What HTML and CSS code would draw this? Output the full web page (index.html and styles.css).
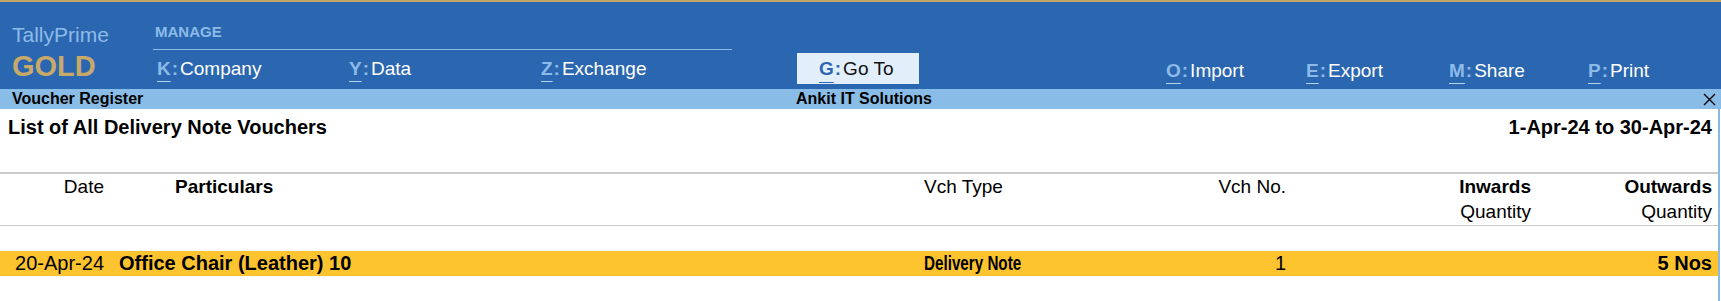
FILE: index.html
```html
<!DOCTYPE html>
<html>
<head>
    <title>Voucher Register - TallyPrime</title>
    <link rel="stylesheet" href="styles.css">
</head>
<body>
    <div class="topbar">
        <div class="brand">
            <div class="brand-name">TallyPrime</div>
            <div class="brand-edition">GOLD</div>
        </div>

        <div class="manage">
            <div class="manage-label">MANAGE</div>
            <div class="menu">
                <div class="menu-item w-wide"><span class="key">K</span><span class="colon">:</span>Company</div>
                <div class="menu-item w-wide"><span class="key">Y</span><span class="colon">:</span>Data</div>
                <div class="menu-item"><span class="key">Z</span><span class="colon">:</span>Exchange</div>
            </div>
        </div>

        <div class="goto"><span class="key">G</span><span class="colon">:</span>Go To</div>

        <div class="menu menu-right">
            <div class="menu-item w-140"><span class="key">O</span><span class="colon">:</span>Import</div>
            <div class="menu-item w-143"><span class="key">E</span><span class="colon">:</span>Export</div>
            <div class="menu-item w-139"><span class="key">M</span><span class="colon">:</span>Share</div>
            <div class="menu-item"><span class="key">P</span><span class="colon">:</span>Print</div>
        </div>
    </div>

    <div class="titlebar">
        <div class="titlebar-left">Voucher Register</div>
        <div class="titlebar-center">Ankit IT Solutions</div>
        <div class="titlebar-right">
            <svg class="close" width="13" height="13" viewBox="0 0 13 13">
                <path d="M1 1 L12 12 M12 1 L1 12" stroke="#000" stroke-width="1.4" fill="none"/>
            </svg>
        </div>
    </div>

    <div class="report">
        <div class="report-head">
            <div class="report-title">List of All Delivery Note Vouchers</div>
            <div class="report-period">1-Apr-24 to 30-Apr-24</div>
        </div>

        <div class="cols">
            <div class="c-date">
                <div class="h1">Date</div>
            </div>
            <div class="c-part">
                <div class="h1 bold">Particulars</div>
            </div>
            <div class="c-type">
                <div class="h1">Vch Type</div>
            </div>
            <div class="c-no">
                <div class="h1">Vch No.</div>
            </div>
            <div class="c-qty">
                <div class="h1 bold">Inwards</div>
                <div class="h2">Quantity</div>
            </div>
            <div class="c-qty2">
                <div class="h1 bold">Outwards</div>
                <div class="h2">Quantity</div>
            </div>
        </div>

        <div class="rows">
            <div class="row selected">
                <div class="c-date">20-Apr-24</div>
                <div class="c-part bold">Office Chair (Leather) 10</div>
                <div class="c-type"><span class="narrow">Delivery Note</span></div>
                <div class="c-no">1</div>
                <div class="c-qty"></div>
                <div class="c-qty2 bold">5 Nos</div>
            </div>
        </div>
    </div>
</body>
</html>
```

FILE: styles.css
```css
body { margin: 0; font-family: "Liberation Sans", Arial, sans-serif; color: #000; background: #fff; }

/* top bar */
.topbar { display: flex; height: 87px; background: #2b67b1; border-top: 2px solid #c4a66b; }
.brand { width: 141px; padding: 21px 0 0 12px; }
.brand-name { font-size: 21px; line-height: 24px; color: #8dbbe8; }
.brand-edition { font-size: 29px; line-height: 32px; font-weight: bold; color: #c8a96a; margin-top: 3px; }

.manage { width: 579px; padding-top: 21px; }
.manage-label { font-size: 15px; line-height: 17px; font-weight: bold; color: #8dbbe8; padding: 0 0 9px 2px; border-bottom: 1px solid #8dbbe8; }
.menu { display: flex; }
.manage .menu { padding: 8px 0 0 4px; }
.menu-item { font-size: 19px; line-height: 22px; color: #fff; white-space: nowrap; }
.w-wide { width: 192px; }
.w-140 { width: 140px; }
.w-143 { width: 143px; }
.w-139 { width: 139px; }
.key { font-weight: bold; color: #8dbbe8; text-decoration: underline; text-decoration-thickness: 1px; text-underline-offset: 6px; text-decoration-color: #b9d3ee; }
.colon { font-weight: bold; color: #8dbbe8; margin: 0 2px 0 1px; }

.goto { margin: 51px 0 0 65px; width: 100px; height: 31px; padding-left: 22px; background: #e3eefb; font-size: 19px; line-height: 31px; color: #111; white-space: nowrap; box-sizing: content-box; }
.goto .key, .goto .colon { color: #2b67b1; text-decoration-color: #2b67b1; }
.goto .key { text-underline-offset: 7px; }

.menu-right { margin: 58px 0 0 247px; }

/* title bar */
.titlebar { display: flex; height: 20px; background: #89bce6; font-size: 16px; line-height: 20px; font-weight: bold; }
.titlebar-left { flex: 1; padding-left: 12px; }
.titlebar-center { flex: none; }
.titlebar-right { flex: 1; display: flex; justify-content: flex-end; align-items: center; padding-right: 5px; }

/* report */
.report { width: 1718px; border-right: 2px solid #8ab9e3; height: 192px; }
.report-head { display: flex; justify-content: space-between; height: 65px; padding: 7px 6px 0 8px; box-sizing: border-box; font-size: 20px; line-height: 23px; font-weight: bold; border-bottom: 2px solid #cacaca; }

.cols, .row { display: flex; font-size: 19px; }
.cols { height: 51px; border-bottom: 1px solid #cacaca; }
.h1 { line-height: 22px; padding-top: 2px; }
.h2 { line-height: 22px; margin-top: 3px; }
.bold { font-weight: bold; }

.c-date { width: 104px; text-align: right; }
.c-part { width: 816px; padding-left: 71px; box-sizing: border-box; }
.c-type { width: 180px; padding-left: 4px; box-sizing: border-box; }
.c-no { width: 186px; text-align: right; }
.c-qty { width: 245px; text-align: right; }
.c-qty2 { width: 181px; text-align: right; }

.rows { padding-top: 25px; }
.row { height: 25px; line-height: 25px; font-size: 20px; }
.row .c-part { padding-left: 15px; }
.selected { background: #fdc42f; }
.narrow { display: inline-block; font-weight: bold; font-size: 20px; transform: scaleX(0.76); transform-origin: left center; white-space: nowrap; }
```
